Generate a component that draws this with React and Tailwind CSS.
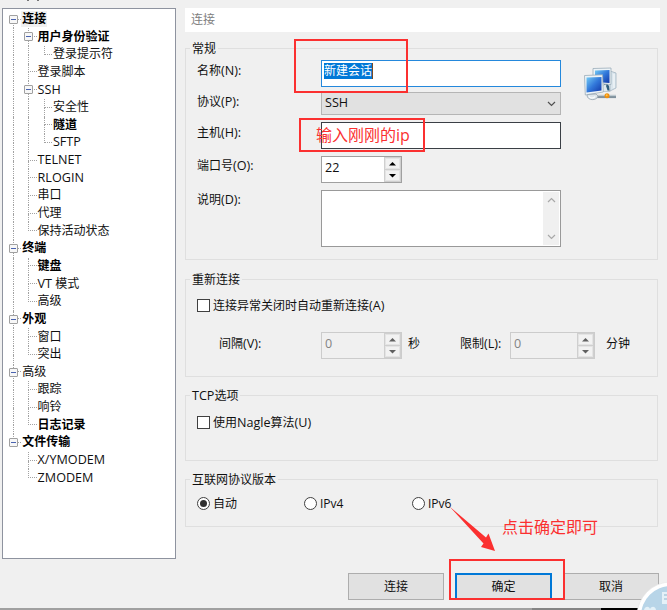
import React from "react";

// Each row: label, guides ("|" pass-through, " " blank, "+" branch, "L" last branch, "r" first root), bold, expandable
const TREE = [
  ["连接", "r", true, true],
  ["用户身份验证", "|+", true, true],
  ["登录提示符", "||L", false, false],
  ["登录脚本", "|+", false, false],
  ["SSH", "|+", false, true],
  ["安全性", "||+", false, false],
  ["隧道", "||+", true, false],
  ["SFTP", "||L", false, false],
  ["TELNET", "|+", false, false],
  ["RLOGIN", "|+", false, false],
  ["串口", "|+", false, false],
  ["代理", "|+", false, false],
  ["保持活动状态", "|L", false, false],
  ["终端", "+", true, true],
  ["键盘", "|+", true, false],
  ["VT 模式", "|+", false, false],
  ["高级", "|L", false, false],
  ["外观", "+", true, true],
  ["窗口", "|+", false, false],
  ["突出", "|L", false, false],
  ["高级", "+", false, true],
  ["跟踪", "|+", false, false],
  ["响铃", "|+", false, false],
  ["日志记录", "|L", true, false],
  ["文件传输", "L", true, true],
  ["X/YMODEM", " +", false, false],
  ["ZMODEM", " L", false, false],
];

// Latin runs are set slightly larger than the Chinese text around them
function Mixed({ text }) {
  return text.split(/([A-Za-z0-9/():]+)/).map((part, i) =>
    i % 2 ? (
      <span key={i} className="text-[12.6px]">
        {part}
      </span>
    ) : (
      part
    )
  );
}

function Guide({ kind, toggle }) {
  const up = kind === "|" || kind === "+" || kind === "L";
  const down = kind === "|" || kind === "+" || kind === "r";
  const across = kind === "+" || kind === "L" || kind === "r";
  return (
    <div className="relative flex h-full w-[15.3px] shrink-0 flex-col pl-[7px]">
      <div
        className={`h-1/2 border-dotted border-[#a2a2a2] ${up ? "border-l" : ""} ${across ? "border-b" : ""}`}
      />
      <div className={`h-1/2 border-dotted border-[#a2a2a2] ${down ? "border-l" : ""}`} />
      {toggle && (
        <div className="absolute left-[3px] top-[4px] flex h-[9px] w-[9px] items-center justify-center rounded-[1px] border border-[#a0a0a0] bg-[#f7f7f7]">
          <div className="h-px w-[5px] bg-[#4a63b0]" />
        </div>
      )}
    </div>
  );
}

function TreeRow({ row, selected }) {
  const [label, guides, bold, toggle] = row;
  const cells = guides.split("");
  return (
    <div className="flex h-[17.65px] items-center">
      {cells.map((kind, i) => (
        <Guide key={i} kind={kind} toggle={toggle && i === cells.length - 1} />
      ))}
      <span
        className={`-mt-px whitespace-nowrap px-px leading-[16px] ${bold ? "font-bold text-black" : ""} ${selected ? "bg-[#f0f0f0]" : ""}`}
      >
        <Mixed text={label} />
      </span>
    </div>
  );
}

function Group({ title, className, children }) {
  return (
    <section className={`w-[473px] border border-[#dfdfdf] ${className}`}>
      <h2 className="-mt-[9px] ml-[4px] h-[18px] w-fit bg-[#f0f0f0] px-[2px] leading-[18px]">
        <Mixed text={title} />
      </h2>
      {children}
    </section>
  );
}

function Label({ children, className }) {
  return (
    <span className={`w-[124px] shrink-0 leading-[18px] ${className || "pt-px"}`}>
      <Mixed text={children} />
    </span>
  );
}

function Spinner({ value, disabled, className }) {
  const arrow = disabled ? "fill-[#606060]" : "fill-black";
  return (
    <div
      className={`flex h-[27px] border ${disabled ? "border-[#cccccc] bg-[#f0f0f0] text-[#838383]" : "border-[#a0a0a0] bg-white"} ${className}`}
    >
      <span className="flex-1 pl-[3px] text-[12.6px] leading-[21px]">{value}</span>
      <div className="flex w-[17px] flex-col gap-px bg-[#cfcfcf] p-px">
        {["M0 3.5h7L3.5 0z", "M0 0h7L3.5 3.5z"].map((d) => (
          <div key={d} className="flex flex-1 items-center justify-center border border-[#e4e4e4] bg-[#f2f2f2]">
            <svg width="7" height="4" viewBox="0 0 7 4" className={arrow}>
              <path d={d} />
            </svg>
          </div>
        ))}
      </div>
    </div>
  );
}

function Check({ children }) {
  return (
    <div className="flex items-center gap-[3px] leading-[18px]">
      <span className="-mt-[2px] h-[13px] w-[13px] border border-[#404040] bg-white" />
      <span>
        <Mixed text={children} />
      </span>
    </div>
  );
}

function Radio({ checked, className, children }) {
  return (
    <div className={`flex items-center gap-[3px] leading-[18px] ${className || ""}`}>
      <span className="-mt-[2px] flex h-[13px] w-[13px] items-center justify-center rounded-full border border-[#404040] bg-white">
        {checked && <span className="h-[7px] w-[7px] rounded-full bg-[#303030]" />}
      </span>
      <span>{children}</span>
    </div>
  );
}

function Chevron({ up, className }) {
  return (
    <svg width="9" height="6" viewBox="0 0 9 6" fill="none" strokeWidth="1.2" className={className}>
      <path d={up ? "M1 5 4.5 1.5 8 5" : "M1 1 4.5 4.5 8 1"} />
    </svg>
  );
}

function NetworkIcon() {
  return (
    <svg width="36" height="36" viewBox="0 0 36 36">
      <defs>
        <linearGradient id="screen" x1="0" y1="0" x2="1" y2="1">
          <stop offset="0" stopColor="#74cbf5" />
          <stop offset=".5" stopColor="#3278da" />
          <stop offset="1" stopColor="#1238a8" />
        </linearGradient>
      </defs>
      <path d="m27 4 6 2v15l-6 3z" fill="#dbe6ed" stroke="#a3b5c1" strokeWidth=".8" />
      <path d="M31 7v14" stroke="#f7fafc" />
      <path d="M21 17h4l1 6h-5z" fill="#2f5d7c" />
      <path d="M10 1.500 28 1v16.500L10 16z" fill="#edf3f7" stroke="#9bacb9" strokeWidth=".8" />
      <path d="M12 3.500 26.500 3v13L12 15z" fill="url(#screen)" />
      <path d="M23 17.500c-4 0-5 3-5 7h9c-2-2-3-4-4-7z" fill="#dfe8ee" stroke="#93a5b3" strokeWidth=".5" />
      <path d="M23 18.500h3l.5 5h-2z" fill="#2f5d7c" />
      <path d="m1.500 8.500 18-.7.8 17.200-18 3z" fill="#edf3f7" stroke="#9bacb9" strokeWidth=".8" />
      <path d="m3.500 10.500 15-.5v13.500l-15 2z" fill="url(#screen)" />
      <path d="M13 29.500h20" stroke="#80919d" strokeWidth="3.200" />
      <path d="M13 28.600h20" stroke="#c6d0d6" />
      <path d="M4 28c0 6 10 6 11 1l-2-2-8 .5z" fill="#dfe7ec" stroke="#96a5b0" strokeWidth=".8" />
      <path d="M6 29.500c1 2 5 2 6 0" fill="none" stroke="#fff" strokeWidth="1.200" />
      <circle cx="24" cy="28.800" r="2.500" fill="#ef8f0f" />
      <circle cx="23.700" cy="28.300" r="1" fill="#ffc44d" />
    </svg>
  );
}

function Button({ primary, children }) {
  return (
    <button
      className={`h-[27px] bg-[#e1e1e1] ${primary ? "w-[97px] border-2 border-[#0078d7]" : "w-[96px] border border-[#adadad]"}`}
    >
      {children}
    </button>
  );
}

export default function App() {
  return (
    <div className="relative flex h-[610px] w-[667px] flex-col overflow-hidden bg-[#f0f0f0] text-[12px] text-[#101010] [font-family:'Open_Sans','Noto_Sans_CJK_SC',sans-serif]">
      <div className="flex h-[8px] gap-[8px] pl-[27px]">
        <span className="h-px w-[2px] bg-[#777777]" />
        <span className="h-px w-[2px] bg-[#777777]" />
      </div>

      <div className="flex h-[565px] gap-[9px] pl-[2px]">
        <nav className="h-[551px] w-[174px] border border-[#8e939f] bg-white pl-[3px] pt-[1.700px]">
          {TREE.map((row, i) => (
            <TreeRow key={i} row={row} selected={i === 0} />
          ))}
        </nav>

        <main className="flex flex-col">
          <header className="h-[24px] w-[475px] bg-white pl-[6px] leading-[24px] text-[#808080]">连接</header>

          <Group title="常规" className="mt-[16px] h-[212px]">
            <div className="flex pl-[11px] pt-[2px]">
              <div className="flex flex-col">
                <div className="flex h-[32px]">
                  <Label className="pt-[2px]">名称(N):</Label>
                  <div className="h-[27px] w-[240px] border border-[#2488dc] bg-white pl-[2px] pt-[2px]">
                    <span className="block h-[16px] w-fit border-r border-[#7a4a20] bg-[#0078d7] leading-[16px] text-white">
                      新建会话
                    </span>
                  </div>
                </div>
                <div className="flex h-[30px]">
                  <Label>协议(P):</Label>
                  <div className="flex h-[23px] w-[240px] items-center justify-between border border-[#b5b5b5] bg-[#e1e1e1] pl-[3px] pr-[4px]">
                    <span className="text-[12.6px]">SSH</span>
                    <Chevron className="stroke-[#505050]" />
                  </div>
                </div>
                <div className="flex h-[34px]">
                  <Label className="pt-[2px]">主机(H):</Label>
                  <div className="h-[27px] w-[240px] border border-[#3a3f45] bg-white" />
                </div>
                <div className="flex h-[34px]">
                  <Label>端口号(O):</Label>
                  <Spinner value="22" className="w-[81px]" />
                </div>
                <div className="flex">
                  <Label>说明(D):</Label>
                  <div className="flex h-[57px] w-[240px] justify-end border border-[#999999] bg-white p-px">
                    <div className="flex w-[16px] flex-col items-center justify-between bg-[#f0f0f0] py-[5px]">
                      <Chevron up className="stroke-[#a8a8a8]" />
                      <Chevron className="stroke-[#a8a8a8]" />
                    </div>
                  </div>
                </div>
              </div>
              <div className="pl-[22px] pt-[7px]">
                <NetworkIcon />
              </div>
            </div>
          </Group>

          <Group title="重新连接" className="mt-[19px] h-[98px]">
            <div className="pl-[11px] pt-[8px]">
              <Check>连接异常关闭时自动重新连接(A)</Check>
            </div>
            <div className="flex pl-[33px] pt-[17px]">
              <span className="w-[102px] pt-[3px] leading-[18px]">
                <Mixed text="间隔(V):" />
              </span>
              <Spinner value="0" disabled className="w-[81px]" />
              <span className="ml-[6px] w-[52px] pt-[3px] leading-[18px]">秒</span>
              <span className="w-[50px] pt-[3px] leading-[18px]">
                <Mixed text="限制(L):" />
              </span>
              <Spinner value="0" disabled className="w-[85px]" />
              <span className="ml-[11px] pt-[3px] leading-[18px]">分钟</span>
            </div>
          </Group>

          <Group title="TCP选项" className="mt-[18px] h-[66px]">
            <div className="pl-[11px] pt-[9px]">
              <Check>使用Nagle算法(U)</Check>
            </div>
          </Group>

          <Group title="互联网协议版本" className="mt-[18px] h-[48px]">
            <div className="flex pl-[11px] pt-[6px]">
              <Radio checked className="w-[107px]">自动</Radio>
              <Radio className="w-[108px]">IPv4</Radio>
              <Radio>IPv6</Radio>
            </div>
          </Group>
        </main>
      </div>

      <footer className="flex h-[35px] gap-[11px] pl-[348px]">
        <Button>连接</Button>
        <Button primary>确定</Button>
        <Button>取消</Button>
      </footer>
      <div className="flex h-[2px]">
        <span className="w-[532px] bg-[#a0a0a0]" />
        <span className="w-[69px] bg-[#858585]" />
        <span className="flex-1 bg-black" />
      </div>

      {/* Annotations drawn over the dialog */}
      <div className="absolute left-[294px] top-[39px] h-[54px] w-[114px] border-2 border-[#fb3030]" />
      <div className="absolute left-[299px] top-[118px] h-[34px] w-[126px] border-2 border-[#fb3030]" />
      <div className="absolute left-[449px] top-[559px] h-[41px] w-[116px] border-2 border-[#fb3030]" />
      <span className="absolute left-[316px] top-[123px] whitespace-nowrap text-[16px] leading-[24px] text-[#fb3030]">
        输入刚刚的ip
      </span>
      <span className="absolute left-[502px] top-[515px] whitespace-nowrap text-[16px] leading-[24px] text-[#fb3030]">
        点击确定即可
      </span>
      <svg className="absolute left-[448px] top-[505px]" width="50" height="48" viewBox="0 0 50 48">
        <path d="M1.500 1.500 38 32.500l2.500-4L47 46 33 42l2.500-3.500z" fill="#fb3030" />
      </svg>
      <svg className="absolute bottom-0 right-0" width="31" height="30" viewBox="0 0 31 30">
        <circle cx="35" cy="36" r="34" fill="#fff" stroke="#e4e4e4" strokeWidth=".6" />
        <circle cx="35" cy="36" r="30" fill="#b8d5e8" />
        <path d="M8 30c1-4 5-4 6-1 2-4 6-2 6 1zM26 12h5v12h-5z" fill="#e4f1f8" />
        <path d="M28 15h3M28 19h3" stroke="#8fb4cd" />
      </svg>
    </div>
  );
}
